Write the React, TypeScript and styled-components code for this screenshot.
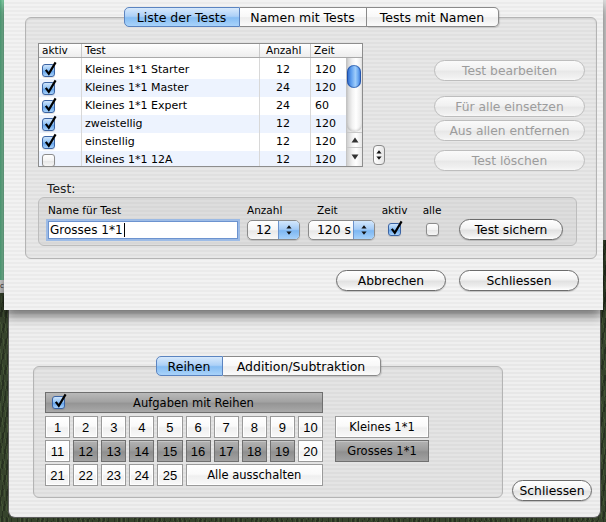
import React from "react";
import styled, { createGlobalStyle, css } from "styled-components";

const GlobalStyle = createGlobalStyle`
  html, body { margin: 0; padding: 0; background: #2f3b27; }
  body { font-family: "DejaVu Sans", "Noto Sans", sans-serif; color: #000; }
  #root { width: 606px; height: 522px; }
`;

const pinstripe = (a: string, b: string) => css`
  background-color: ${a};
  background-image: repeating-linear-gradient(to bottom, ${a} 0px, ${a} 2px, ${b} 2px, ${b} 4px);
`;

const Desktop = styled.div`
  position: relative;
  width: 606px;
  height: 522px;
  overflow: hidden;
  background-color: #36432c;
  background-image:
    repeating-linear-gradient(82deg, rgba(140, 170, 100, 0.16) 0 1px, transparent 1px 4px),
    repeating-linear-gradient(101deg, rgba(0, 0, 0, 0.28) 0 2px, transparent 2px 5px);
`;

const GreenPane = styled.div`
  position: absolute;
  left: 0;
  top: 0;
  width: 8px;
  height: 280px;
  background: linear-gradient(to right, #55b083, #86d0a8 35%, #5db88a 70%, #4da67a);
`;

const BackTitle = styled.div`
  position: absolute;
  left: 0;
  top: 280px;
  width: 8px;
  height: 13px;
  background: linear-gradient(#e6e6e6, #cacaca);
  font-size: 7px;
  line-height: 13px;
  color: #222;
`;

const RightPane = styled.div`
  position: absolute;
  right: 0;
  top: 0;
  width: 8px;
  height: 240px;
  background: #e4e4e4;
`;

/* ---------- generic Aqua controls ---------- */

const PushButton = styled.div<{ $w: number; $disabled?: boolean; $mt?: number }>`
  box-sizing: border-box;
  width: ${(p) => p.$w}px;
  height: 21px;
  margin-top: ${(p) => p.$mt ?? 0}px;
  border-radius: 11px;
  border: 1px solid ${(p) => (p.$disabled ? "#bdbdbd" : "#6c6c6c")};
  background: ${(p) =>
    p.$disabled
      ? "linear-gradient(to bottom, #fafafa 0%, #f1f1f1 45%, #e8e8e8 55%, #f0f0f0 85%, #f8f8f8 100%)"
      : "linear-gradient(to bottom, #ffffff 0%, #f4f4f4 42%, #e2e2e2 55%, #eeeeee 80%, #ffffff 100%)"};
  box-shadow: ${(p) => (p.$disabled ? "none" : "0 1px 1px rgba(0,0,0,0.18)")};
  display: flex;
  align-items: center;
  justify-content: center;
  font-size: 12.3px;
  color: ${(p) => (p.$disabled ? "#9c9c9c" : "#000")};
  white-space: nowrap;
  flex-shrink: 0;
`;

const Segs = styled.div`
  display: flex;
  height: 20px;
  position: relative;
  z-index: 1;
  margin-bottom: -10px;
`;

const Seg = styled.div<{ $w: number; $active?: boolean }>`
  box-sizing: border-box;
  width: ${(p) => p.$w}px;
  height: 20px;
  border: 1px solid ${(p) => (p.$active ? "#5b84c0" : "#8a8a8a")};
  border-left-width: 0;
  background: ${(p) =>
    p.$active
      ? "linear-gradient(to bottom, #d7e9fc 0%, #acd0f7 46%, #86bdf3 54%, #a9d3fa 100%)"
      : "linear-gradient(to bottom, #ffffff 0%, #f8f8f8 48%, #ededed 54%, #fbfbfb 100%)"};
  display: flex;
  align-items: center;
  justify-content: center;
  font-size: 12.5px;
  white-space: nowrap;
  &:first-child {
    border-left-width: 1px;
    border-radius: 5px 0 0 5px;
  }
  &:last-child {
    border-radius: 0 5px 5px 0;
    box-shadow: 1px 1px 1px rgba(0, 0, 0, 0.12);
  }
`;

const TabGroup = styled.div<{ $w: number; $ml?: number; $mb?: number }>`
  display: flex;
  flex-direction: column;
  align-items: center;
  width: ${(p) => p.$w}px;
  margin-left: ${(p) => p.$ml ?? 0}px;
  margin-bottom: ${(p) => p.$mb ?? 0}px;
  flex-shrink: 0;
`;

const GroupBox = styled.div<{ $h: number; $pad: string }>`
  align-self: stretch;
  box-sizing: border-box;
  height: ${(p) => p.$h}px;
  padding: ${(p) => p.$pad};
  border: 1px solid #b4b4b4;
  border-radius: 6px;
  background: rgba(0, 0, 0, 0.045);
  box-shadow: inset 0 1px 2px rgba(0, 0, 0, 0.07);
`;

const CheckBoxFrame = styled.div<{ $checked?: boolean }>`
  position: relative;
  box-sizing: border-box;
  width: 13px;
  height: 13px;
  border-radius: 3px;
  border: 1px solid ${(p) => (p.$checked ? "#3c64a3" : "#8c8c8c")};
  background: ${(p) =>
    p.$checked
      ? "linear-gradient(to bottom, #cfe5fc 0%, #8dc0f4 48%, #63a3ea 55%, #a8d2fb 100%)"
      : "linear-gradient(to bottom, #fefefe 0%, #f3f3f3 50%, #e6e6e6 55%, #f6f6f6 100%)"};
  box-shadow: 0 1px 1px rgba(0, 0, 0, 0.12);
  flex-shrink: 0;
  & > svg {
    position: absolute;
    left: 1px;
    top: -4px;
  }
`;

const CheckBox = ({ checked }: { checked?: boolean }) => (
  <CheckBoxFrame $checked={checked}>
    {checked && (
      <svg width="13" height="15" viewBox="0 0 13 15">
        <path d="M1.8 8.8 L4.8 12.8 L11.6 1.4" fill="none" stroke="#000" strokeWidth="2.2" strokeLinejoin="miter" />
      </svg>
    )}
  </CheckBoxFrame>
);

const UpDown = ({ size = 4 }: { size?: number }) => (
  <svg width={size * 2} height="12" viewBox="0 0 8 12">
    <path d="M4 1.2 L6.6 4.6 L1.4 4.6 Z" fill="#111" />
    <path d="M4 10.8 L6.6 7.4 L1.4 7.4 Z" fill="#111" />
  </svg>
);

/* ---------- sheet ---------- */

const Sheet = styled.div`
  position: absolute;
  left: 4px;
  top: 0;
  width: 599px;
  height: 310px;
  box-sizing: border-box;
  ${pinstripe("#f2f2f2", "#ebebeb")}
  box-shadow: 0 5px 12px rgba(0, 0, 0, 0.6);
  display: flex;
  flex-direction: column;
  padding-top: 7px;
  z-index: 2;
`;

const TopRow = styled.div`
  display: flex;
  align-items: flex-start;
  height: 124px;
`;

const Table = styled.div`
  width: 325px;
  height: 124px;
  box-sizing: border-box;
  border: 1px solid #8d8d8d;
  background: #fff;
  display: flex;
  flex-direction: column;
  overflow: hidden;
  flex-shrink: 0;
`;

const HeaderRow = styled.div`
  display: grid;
  grid-template-columns: 43px 178px 51px 51px;
  height: 13px;
  background: linear-gradient(#ffffff, #ededed);
  border-bottom: 1px solid #a9a9a9;
  font-size: 10.5px;
  line-height: 13px;
`;

const HeadCell = styled.div<{ $pl: number; $last?: boolean }>`
  padding-left: ${(p) => p.$pl}px;
  border-right: ${(p) => (p.$last ? "none" : "1px solid #c9c9c9")};
  white-space: nowrap;
  overflow: hidden;
`;

const TableBody = styled.div`
  flex: 1;
  display: flex;
  min-height: 0;
`;

const Rows = styled.div`
  width: 307px;
  padding-top: 3px;
  overflow: hidden;
  background-image: linear-gradient(to right, transparent 42px, #d8d8d8 42px, #d8d8d8 43px, transparent 43px,
    transparent 220px, #d8d8d8 220px, #d8d8d8 221px, transparent 221px,
    transparent 271px, #d8d8d8 271px, #d8d8d8 272px, transparent 272px);
`;

const Row = styled.div<{ $alt?: boolean }>`
  display: grid;
  grid-template-columns: 43px 178px 51px 35px;
  height: 18px;
  align-items: center;
  font-size: 11px;
  line-height: 18px;
  background-color: ${(p) => (p.$alt ? "#edf3fe" : "#ffffff")};
`;

const CheckCell = styled.div`
  padding-left: 3px;
  display: flex;
  align-items: center;
  border-right: 1px solid #d8d8d8;
  height: 18px;
`;

const TextCell = styled.div<{ $align?: string; $pl?: number; $line?: boolean }>`
  text-align: ${(p) => p.$align ?? "left"};
  padding-left: ${(p) => p.$pl ?? 0}px;
  padding-right: ${(p) => (p.$align === "center" ? 4 : 0)}px;
  border-right: ${(p) => (p.$line ? "1px solid #d8d8d8" : "none")};
  white-space: nowrap;
  height: 18px;
`;

const ScrollBar = styled.div`
  width: 16px;
  display: flex;
  flex-direction: column;
  background: linear-gradient(to right, #cfcfcf, #f2f2f2 35%, #ffffff 60%, #e8e8e8);
  border-left: 1px solid #c4c4c4;
  box-sizing: border-box;
`;

const Track = styled.div`
  flex: 1;
  position: relative;
  border-radius: 0 0 7px 7px;
  box-shadow: inset 0 -2px 2px rgba(0, 0, 0, 0.12);
`;

const Thumb = styled.div`
  position: absolute;
  left: 0;
  top: 7px;
  width: 14px;
  height: 23px;
  border-radius: 7px;
  background: linear-gradient(to right, #2a62c4 0%, #5d9eee 30%, #9fcdfb 60%, #6aa8f0 80%, #2f6ad0 100%);
  box-shadow: inset 0 0 0 1px rgba(20, 60, 140, 0.55);
`;

const ArrowBtn = styled.div<{ $h: number }>`
  height: ${(p) => p.$h}px;
  display: flex;
  align-items: center;
  justify-content: center;
  border-top: 1px solid #c8c8c8;
  box-sizing: border-box;
`;

const MiniStepper = styled.div`
  box-sizing: border-box;
  width: 12px;
  height: 20px;
  margin-left: 10px;
  align-self: flex-end;
  margin-bottom: 2px;
  border: 1px solid #8a8a8a;
  border-radius: 4px;
  background: linear-gradient(to right, #ffffff, #e6e6e6);
  display: flex;
  align-items: center;
  justify-content: center;
  flex-shrink: 0;
`;

const ButtonCol = styled.div`
  margin-left: 49px;
  padding-top: 17px;
  display: flex;
  flex-direction: column;
  width: 151px;
`;

const SectionLabel = styled.div`
  margin: 14px 0 0 9px;
  height: 16px;
  font-size: 12.3px;
  line-height: 16px;
  color: #222;
`;

const InnerBox = styled.div`
  box-sizing: border-box;
  width: 539px;
  height: 49px;
  border: 1px solid #bdbdbd;
  border-radius: 6px;
  background: rgba(0, 0, 0, 0.04);
  display: flex;
  align-items: flex-start;
  padding: 6px 0 0 7px;
`;

const Field = styled.div<{ $w: number; $ml?: number; $center?: boolean }>`
  display: flex;
  flex-direction: column;
  align-items: ${(p) => (p.$center ? "center" : "stretch")};
  width: ${(p) => p.$w}px;
  margin-left: ${(p) => p.$ml ?? 0}px;
  flex-shrink: 0;
`;

const SmallLabel = styled.div<{ $pl?: number }>`
  height: 13px;
  font-size: 10.5px;
  line-height: 13px;
  padding-left: ${(p) => p.$pl ?? 0}px;
  white-space: nowrap;
  margin-bottom: 2px;
`;

const ControlSlot = styled.div`
  height: 21px;
  display: flex;
  align-items: center;
`;

const TextInput = styled.div`
  box-sizing: border-box;
  margin: 0 3px;
  width: 188px;
  height: 16px;
  background: #fff;
  box-shadow: 0 0 0 1px #6c93cf, 0 0 0 3px rgba(125, 170, 235, 0.65);
  font-size: 12px;
  line-height: 16px;
  padding-left: 1px;
  display: flex;
  align-items: center;
`;

const Caret = styled.span`
  display: inline-block;
  width: 1px;
  height: 14px;
  background: #000;
  margin-left: 1px;
`;

const Popup = styled.div<{ $w: number }>`
  box-sizing: border-box;
  width: ${(p) => p.$w}px;
  height: 20px;
  border: 1px solid #8a8a8a;
  border-radius: 5px;
  overflow: hidden;
  display: flex;
  background: linear-gradient(to bottom, #ffffff 0%, #f5f5f5 48%, #e8e8e8 55%, #f8f8f8 100%);
  box-shadow: 0 1px 1px rgba(0, 0, 0, 0.15);
`;

const PopupText = styled.div`
  flex: 1;
  padding-left: 8px;
  font-size: 12.3px;
  line-height: 18px;
  white-space: nowrap;
`;

const PopupArrows = styled.div`
  width: 20px;
  border-left: 1px solid #6b93cc;
  background: linear-gradient(to bottom, #d3e7fc 0%, #a4cbf6 46%, #7db7f2 54%, #a6d1fa 100%);
  display: flex;
  align-items: center;
  justify-content: center;
`;

const BottomButtons = styled.div`
  display: flex;
  justify-content: flex-end;
  gap: 13px;
  margin-top: 11px;
  padding-right: 24px;
`;

/* ---------- document window ---------- */

const DocWindow = styled.div`
  position: absolute;
  left: 8px;
  top: 250px;
  width: 593px;
  height: 268px;
  box-sizing: border-box;
  ${pinstripe("#efefef", "#e7e7e7")}
  border: 1px solid #5c5c5c;
  border-top: none;
  border-radius: 0 0 7px 7px;
  display: flex;
  align-items: flex-end;
  padding: 0 8px 16px 24px;
  z-index: 1;
`;

const ReihenLayout = styled.div`
  display: flex;
  align-items: flex-start;
`;

const GridCol = styled.div`
  width: 278px;
  display: flex;
  flex-direction: column;
`;

const BarToggle = styled.div`
  box-sizing: border-box;
  height: 21px;
  margin-bottom: 3px;
  border: 1px solid #6f6f6f;
  background: linear-gradient(to bottom, #b9b9b9 0%, #a3a3a3 45%, #959595 55%, #a9a9a9 100%);
  display: flex;
  align-items: center;
  padding-left: 6px;
  font-size: 11.5px;
`;

const BarText = styled.div`
  flex: 1;
  text-align: center;
`;

const NumGrid = styled.div`
  display: grid;
  grid-template-columns: repeat(10, 1fr);
  grid-auto-rows: 22px;
  column-gap: 3px;
  row-gap: 2px;
`;

const Cell = styled.div<{ $on?: boolean; $span?: number; $lucida?: boolean }>`
  box-sizing: border-box;
  grid-column: span ${(p) => p.$span ?? 1};
  border: 1px solid ${(p) => (p.$on ? "#707070" : "#9a9a9a")};
  background: ${(p) =>
    p.$on
      ? "linear-gradient(to bottom, #b3b3b3 0%, #9d9d9d 45%, #8f8f8f 55%, #a2a2a2 100%)"
      : "linear-gradient(to bottom, #ffffff 0%, #fafafa 45%, #efefef 55%, #f9f9f9 100%)"};
  box-shadow: ${(p) => (p.$on ? "inset 0 1px 0 rgba(255,255,255,0.25)" : "inset 0 0 0 1px #ffffff")};
  display: flex;
  align-items: center;
  justify-content: center;
  font-family: ${(p) => (p.$lucida ? '"DejaVu Sans", sans-serif' : '"Liberation Sans", Arial, sans-serif')};
  font-size: ${(p) => (p.$lucida ? "11.5px" : "13px")};
  color: #000;
`;

const PresetCol = styled.div`
  margin-left: 12px;
  padding-top: 24px;
  width: 94px;
  display: grid;
  grid-auto-rows: 22px;
  row-gap: 2px;
`;

const tests = [
  { name: "Kleines 1*1 Starter", n: 12, t: 120, on: true },
  { name: "Kleines 1*1 Master", n: 24, t: 120, on: true },
  { name: "Kleines 1*1 Expert", n: 24, t: 60, on: true },
  { name: "zweistellig", n: 12, t: 120, on: true },
  { name: "einstellig", n: 12, t: 120, on: true },
  { name: "Kleines 1*1 12A", n: 12, t: 120, on: false },
];

export default function App() {
  const nums = Array.from({ length: 25 }, (_, i) => i + 1);
  return (
    <>
      <GlobalStyle />
      <Desktop>
        <GreenPane />
        <BackTitle>c</BackTitle>
        <RightPane />

        <DocWindow>
          <TabGroup $w={470} $mb={3}>
            <Segs>
              <Seg $w={67} $active>Reihen</Seg>
              <Seg $w={158}>Addition/Subtraktion</Seg>
            </Segs>
            <GroupBox $h={132} $pad="25px 0 0 11px">
              <ReihenLayout>
                <GridCol>
                  <BarToggle>
                    <CheckBox checked />
                    <BarText>Aufgaben mit Reihen</BarText>
                  </BarToggle>
                  <NumGrid>
                    {nums.map((n) => (
                      <Cell key={n} $on={n >= 12 && n <= 19}>
                        {n}
                      </Cell>
                    ))}
                    <Cell $span={5} $lucida>
                      Alle ausschalten
                    </Cell>
                  </NumGrid>
                </GridCol>
                <PresetCol>
                  <Cell $lucida>Kleines 1*1</Cell>
                  <Cell $lucida $on>
                    Grosses 1*1
                  </Cell>
                </PresetCol>
              </ReihenLayout>
            </GroupBox>
          </TabGroup>
          <PushButton $w={80} style={{ marginLeft: 9 }}>
            Schliessen
          </PushButton>
        </DocWindow>

        <Sheet>
          <TabGroup $w={572} $ml={21}>
            <Segs>
              <Seg $w={116} $active>Liste der Tests</Seg>
              <Seg $w={127}>Namen mit Tests</Seg>
              <Seg $w={132}>Tests mit Namen</Seg>
            </Segs>
            <GroupBox $h={242} $pad="25px 11px 0 12px">
              <TopRow>
                <Table>
                  <HeaderRow>
                    <HeadCell $pl={3}>aktiv</HeadCell>
                    <HeadCell $pl={3}>Test</HeadCell>
                    <HeadCell $pl={6}>Anzahl</HeadCell>
                    <HeadCell $pl={3} $last>
                      Zeit
                    </HeadCell>
                  </HeaderRow>
                  <TableBody>
                    <Rows>
                      {tests.map((t, i) => (
                        <Row key={t.name} $alt={i % 2 === 1}>
                          <CheckCell>
                            <CheckBox checked={t.on} />
                          </CheckCell>
                          <TextCell $pl={3} $line>
                            {t.name}
                          </TextCell>
                          <TextCell $align="center" $line>
                            {t.n}
                          </TextCell>
                          <TextCell $pl={4}>{t.t}</TextCell>
                        </Row>
                      ))}
                    </Rows>
                    <ScrollBar>
                      <Track>
                        <Thumb />
                      </Track>
                      <ArrowBtn $h={15}>
                        <svg width="8" height="6" viewBox="0 0 8 6">
                          <path d="M4 0.5 L7.5 5.5 L0.5 5.5 Z" fill="#333" />
                        </svg>
                      </ArrowBtn>
                      <ArrowBtn $h={19}>
                        <svg width="8" height="6" viewBox="0 0 8 6">
                          <path d="M4 5.5 L7.5 0.5 L0.5 0.5 Z" fill="#333" />
                        </svg>
                      </ArrowBtn>
                    </ScrollBar>
                  </TableBody>
                </Table>
                <MiniStepper>
                  <UpDown />
                </MiniStepper>
                <ButtonCol>
                  <PushButton $w={151} $disabled>
                    Test bearbeiten
                  </PushButton>
                  <PushButton $w={151} $disabled $mt={15}>
                    Für alle einsetzen
                  </PushButton>
                  <PushButton $w={151} $disabled $mt={3}>
                    Aus allen entfernen
                  </PushButton>
                  <PushButton $w={151} $disabled $mt={9}>
                    Test löschen
                  </PushButton>
                </ButtonCol>
              </TopRow>
              <SectionLabel>Test:</SectionLabel>
              <InnerBox>
                <Field $w={194}>
                  <SmallLabel $pl={2}>Name für Test</SmallLabel>
                  <ControlSlot>
                    <TextInput>
                      Grosses 1*1
                      <Caret />
                    </TextInput>
                  </ControlSlot>
                </Field>
                <Field $w={53} $ml={7}>
                  <SmallLabel>Anzahl</SmallLabel>
                  <ControlSlot>
                    <Popup $w={53}>
                      <PopupText>12</PopupText>
                      <PopupArrows>
                        <UpDown />
                      </PopupArrows>
                    </Popup>
                  </ControlSlot>
                </Field>
                <Field $w={67} $ml={8}>
                  <SmallLabel $pl={9}>Zeit</SmallLabel>
                  <ControlSlot>
                    <Popup $w={67}>
                      <PopupText>120 s</PopupText>
                      <PopupArrows>
                        <UpDown />
                      </PopupArrows>
                    </Popup>
                  </ControlSlot>
                </Field>
                <Field $w={25} $ml={7} $center>
                  <SmallLabel>aktiv</SmallLabel>
                  <ControlSlot>
                    <CheckBox checked />
                  </ControlSlot>
                </Field>
                <Field $w={20} $ml={15} $center>
                  <SmallLabel>alle</SmallLabel>
                  <ControlSlot>
                    <CheckBox />
                  </ControlSlot>
                </Field>
                <Field $w={104} $ml={17}>
                  <SmallLabel />
                  <PushButton $w={104}>Test sichern</PushButton>
                </Field>
              </InnerBox>
            </GroupBox>
          </TabGroup>
          <BottomButtons>
            <PushButton $w={110}>Abbrechen</PushButton>
            <PushButton $w={120}>Schliessen</PushButton>
          </BottomButtons>
        </Sheet>
      </Desktop>
    </>
  );
}
